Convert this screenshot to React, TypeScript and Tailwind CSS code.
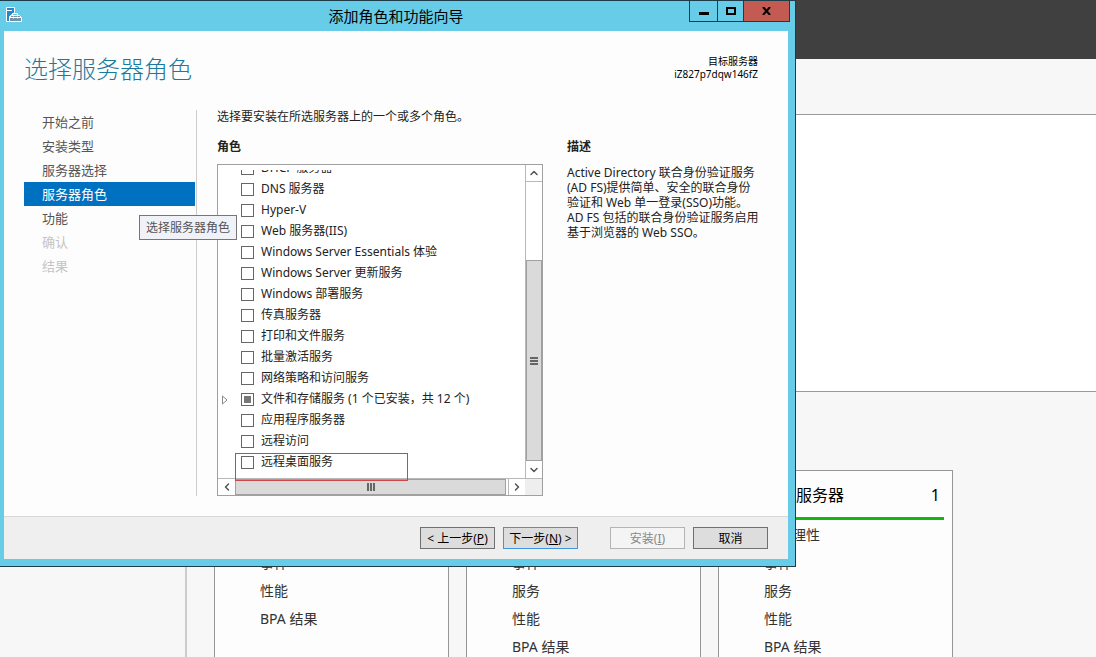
import { ChevronDown, ChevronLeft, ChevronRight, ChevronUp } from 'lucide-react';

const steps = [
  { label: '开始之前', state: 'done' },
  { label: '安装类型', state: 'done' },
  { label: '服务器选择', state: 'done' },
  { label: '服务器角色', state: 'current' },
  { label: '功能', state: 'done' },
  { label: '确认', state: 'disabled' },
  { label: '结果', state: 'disabled' },
];

const roles = [
  { id: 'dhcp', name: 'DHCP 服务器' },
  { id: 'dns', name: 'DNS 服务器' },
  { id: 'hyperv', name: 'Hyper-V' },
  { id: 'web', name: 'Web 服务器(IIS)' },
  { id: 'essentials', name: 'Windows Server Essentials 体验' },
  { id: 'wsus', name: 'Windows Server 更新服务' },
  { id: 'wds', name: 'Windows 部署服务' },
  { id: 'fax', name: '传真服务器' },
  { id: 'print', name: '打印和文件服务' },
  { id: 'activation', name: '批量激活服务' },
  { id: 'npas', name: '网络策略和访问服务' },
  { id: 'storage', name: '文件和存储服务 (1 个已安装，共 12 个)', partial: true },
  { id: 'app', name: '应用程序服务器' },
  { id: 'remote', name: '远程访问' },
  { id: 'rds', name: '远程桌面服务' },
];

const tiles = [
  { title: '文件和存储服务', rows: ['可管理性', '事件', '性能', 'BPA 结果'] },
  { title: '本地服务器', rows: ['可管理性', '事件', '服务', '性能', 'BPA 结果'] },
  { title: '所有服务器', rows: ['可管理性', '事件', '服务', '性能', 'BPA 结果'] },
];

function getStepClass(state: string) {
  switch (state) {
    case 'current': return 'bg-[#0070c0] text-white';
    case 'disabled': return 'text-[#c4c4c4]';
    default: return 'text-[#555555]';
  }
}

function WizardIcon() {
  return (
    <svg width="17" height="17" viewBox="0 0 17 17" aria-hidden="true">
      <path d="M.5 1.500h8v5l-5 4v5h-3z" fill="#2a86c8" stroke="#fff" />
      <path d="M1 4.500h5" stroke="#fff" />
      <path d="M6.500 9.500V7.500h5v2" fill="none" stroke="#fff" />
      <path d="M5.500 9.500h8l2 2v4h-12v-4z" fill="#7890a3" stroke="#fff" />
      <path d="M4 11.500h3M8 11.500h3M12 11.500h3M7.500 10.500v2M11.500 10.500v2" stroke="#fff" />
    </svg>
  );
}

function ServerManager() {
  return (
    <div className="flex h-full flex-col bg-[#f7f7f7]">
      <header className="h-[59px] shrink-0 bg-[#404040]" />
      <div className="h-14 shrink-0 border-b border-[#9a9a9a]" />
      <div className="flex min-h-0 flex-1">
        <aside className="w-[187px] shrink-0 border-r-2 border-[#cccccc]" />
        <main className="flex-1">
          <section className="h-[277px] border-b border-[#9a9a9a] bg-white" />
          <section className="flex gap-[17px] pt-[78px] pl-[27px]">
            {tiles.map((tile) => (
              <article key={tile.title} className="h-80 w-[235px] shrink-0 border border-[#969696] bg-[#fdfdfd] px-2">
                <div className="flex h-[49px] items-center justify-between border-b-3 border-[#12b812] pt-[2px] pr-1 pl-[37px] text-base text-black">
                  <h2>{tile.title}</h2>
                  <span>1</span>
                </div>
                <ul className="pt-px pl-[37px] text-sm leading-7 text-[#333333]">
                  {tile.rows.map((row) => (
                    <li key={row}>{row}</li>
                  ))}
                </ul>
              </article>
            ))}
          </section>
        </main>
      </div>
    </div>
  );
}

function RoleList() {
  return (
    <div className="relative flex h-[332px] flex-col border border-[#a0a0a0] bg-white">
      <div className="flex min-h-0 flex-1">
        <div className="flex min-w-0 flex-1 flex-col py-[5px]">
          <ul className="flex min-h-0 flex-1 flex-col justify-end overflow-hidden">
            {roles.map((role) => (
              <li key={role.id} className="flex h-[21px] shrink-0 items-center">
                <span className="flex w-[23px] shrink-0 pl-1">
                  {role.partial && (
                    <svg width="6" height="10" viewBox="0 0 6 10" aria-hidden="true">
                      <path d="M.5 1v8L5 5z" fill="#fff" stroke="#8a8a8a" />
                    </svg>
                  )}
                </span>
                <label className="flex items-center gap-[7px] whitespace-nowrap">
                  <span className="grid place-items-center">
                    <input
                      type="checkbox"
                      defaultChecked={role.partial}
                      className="peer col-start-1 row-start-1 size-[13px] appearance-none border border-[#666666] bg-white"
                    />
                    <span className="pointer-events-none col-start-1 row-start-1 hidden size-[7px] bg-[#777777] peer-checked:block" />
                  </span>
                  <span className="pb-[2px]">{role.name}</span>
                </label>
              </li>
            ))}
          </ul>
        </div>
        <div className="flex w-[17px] flex-col border-l border-[#b8b8b8] text-[#555555]">
          <button aria-label="向上滚动" className="flex h-[17px] items-center justify-center border-b border-[#b8b8b8]">
            <ChevronUp size={12} strokeWidth={3} />
          </button>
          <div className="h-[78px]" />
          <div className="flex flex-1 flex-col items-center justify-center gap-px border border-[#a0a0a0] bg-[#dadada]">
            <span className="h-[2px] w-2 bg-[#666666]" />
            <span className="h-[2px] w-2 bg-[#666666]" />
            <span className="h-[2px] w-2 bg-[#666666]" />
          </div>
          <button aria-label="向下滚动" className="flex h-[17px] items-center justify-center">
            <ChevronDown size={12} strokeWidth={3} />
          </button>
        </div>
      </div>
      <div className="flex h-[17px] border-t border-[#b8b8b8] text-[#555555]">
        <button aria-label="向左滚动" className="flex w-[17px] items-center justify-center">
          <ChevronLeft size={12} strokeWidth={3} />
        </button>
        <div className="flex flex-1 items-center justify-center gap-px border border-[#a0a0a0] bg-[#dadada]">
          <span className="h-2 w-[2px] bg-[#666666]" />
          <span className="h-2 w-[2px] bg-[#666666]" />
          <span className="h-2 w-[2px] bg-[#666666]" />
        </div>
        <button aria-label="向右滚动" className="ml-[2px] flex w-[17px] items-center justify-center border-l border-[#b8b8b8]">
          <ChevronRight size={12} strokeWidth={3} />
        </button>
        <div className="w-[17px] bg-[#eeeeee]" />
      </div>
      {/* highlight around the remote desktop role */}
      <div className="pointer-events-none absolute top-[288px] left-[17px] z-10 h-7 w-[173px] border border-[#d0454a]" />
    </div>
  );
}

function Wizard() {
  return (
    <div
      role="dialog"
      aria-label="添加角色和功能向导"
      className="absolute top-0 left-0 w-[796px] border-t border-r border-b border-[#1d3c4a] bg-[#66cce8] pr-[7px] pb-[7px] pl-1 text-xs text-[#222222]"
    >
      <div className="relative flex h-[30px] items-center justify-center">
        <span className="absolute top-[5px] left-[2px]">
          <WizardIcon />
        </span>
        <h1 className="text-[15px] text-black">添加角色和功能向导</h1>
        <div className="absolute top-0 -right-[2px] flex h-[21px] divide-x divide-[#1d3c4a] border-x border-b border-[#1d3c4a]">
          <button aria-label="最小化" className="flex w-7 items-center justify-center">
            <span className="mt-1 h-[3px] w-[10px] bg-black" />
          </button>
          <button aria-label="最大化" className="flex w-[26px] items-center justify-center">
            <span className="h-2 w-[10px] border-2 border-black" />
          </button>
          <button aria-label="关闭" className="flex w-[45px] items-center justify-center bg-[#c45b52]">
            <svg width="9" height="8" viewBox="0 0 9 8" aria-hidden="true">
              <path d="M1 0l7 8M8 0L1 8" stroke="#000" strokeWidth="2" />
            </svg>
          </button>
        </div>
      </div>

      <div className="bg-[#fdfdfd]">
        <div className="flex h-[79px] items-start justify-between pr-[30px] pl-5">
          <h2 className="pt-[22px] text-2xl font-light text-[#1a7a9e]">选择服务器角色</h2>
          <p className="pt-6 text-right text-[10px] leading-[13px] text-black">
            目标服务器
            <br />
            iZ827p7dqw146fZ
          </p>
        </div>

        <div className="flex pb-5 pl-5">
          <nav className="relative w-[173px] shrink-0 border-r border-[#cccccc] pr-px text-[13px] leading-6">
            {steps.map((step) => (
              <a key={step.label} href="#" className={`block h-6 pl-[18px] ${getStepClass(step.state)}`}>
                {step.label}
              </a>
            ))}
            <div
              role="tooltip"
              className="absolute top-[105px] left-[115px] z-10 border border-[#767676] bg-[#f1f2f7] px-[6px] text-xs leading-[23px] whitespace-nowrap text-[#555555]"
            >
              选择服务器角色
            </div>
          </nav>
          <div className="w-[346px] shrink-0 pl-5">
            <p className="h-[30px] leading-[14px]">选择要安装在所选服务器上的一个或多个角色。</p>
            <h3 className="h-6 leading-[14px] font-bold">角色</h3>
            <RoleList />
          </div>
          <div className="flex-1 pt-[30px] pr-5 pl-6">
            <h3 className="h-[25px] leading-[14px] font-bold">描述</h3>
            <p className="leading-[15px] whitespace-nowrap">
              Active Directory 联合身份验证服务
              <br />
              (AD FS)提供简单、安全的联合身份
              <br />
              验证和 Web 单一登录(SSO)功能。
              <br />
              AD FS 包括的联合身份验证服务启用
              <br />
              基于浏览器的 Web SSO。
            </p>
          </div>
        </div>

        <div className="flex h-[43px] justify-end gap-2 border-t border-[#d9d9d9] bg-[#efefef] pt-[10px] pr-5 text-black">
          <button className="h-[22px] w-[75px] border border-[#707070] bg-[#dddddd] pt-px whitespace-nowrap">
            &lt; 上一步(<u>P</u>)
          </button>
          <button className="h-[22px] w-[75px] border border-[#3c96e0] bg-[#dddddd] pt-px whitespace-nowrap">
            下一步(<u>N</u>) &gt;
          </button>
          <button disabled className="ml-6 h-[22px] w-[75px] border border-[#b4b4b4] bg-[#f4f4f4] pt-px text-[#888888]">
            安装(<u>I</u>)
          </button>
          <button className="h-[22px] w-[75px] border border-[#707070] bg-[#dddddd] pt-px">取消</button>
        </div>
      </div>
    </div>
  );
}

export default function App() {
  return (
    <div className="relative h-screen overflow-hidden font-['Noto_Sans','Noto_Sans_CJK_SC',sans-serif]">
      <ServerManager />
      <Wizard />
    </div>
  );
}
